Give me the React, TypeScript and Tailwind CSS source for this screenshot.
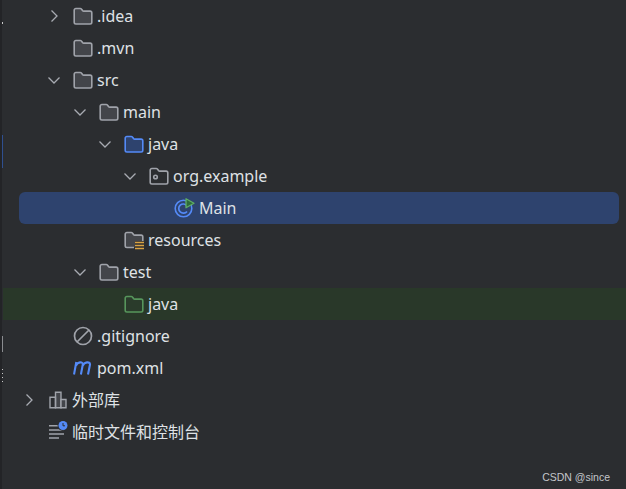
import type { ReactNode } from "react";

const gray = "#a0a3aa";
const folderPath =
  "M1.2 3.2A1.7 1.7 0 0 1 2.9 1.5h4.3c.5 0 .9.2 1.2.6l1.2 1.5c.3.3.6.5 1 .5h6.5a1.7 1.7 0 0 1 1.7 1.7v9.5a1.7 1.7 0 0 1-1.7 1.7H2.9a1.7 1.7 0 0 1-1.7-1.7z";

function Chevron({ open }: { open?: boolean }) {
  return (
    <svg width="16" height="16" viewBox="0 0 16 16" fill="none" stroke="#a8abb2" strokeWidth="1.3">
      {open ? <path d="M2.5 5.5 8 11l5.5-5.5" /> : <path d="M5.5 2.5 11 8l-5.5 5.5" />}
    </svg>
  );
}

function Folder({ stroke = gray, fill = "#43454a" }: { stroke?: string; fill?: string }) {
  return (
    <svg width="20" height="18" viewBox="0 0 20 18" fill={fill} stroke={stroke} strokeWidth="1.6">
      <path d={folderPath} />
    </svg>
  );
}

function PackageIcon() {
  return (
    <svg width="20" height="18" viewBox="0 0 20 18" fill="none" stroke={gray} strokeWidth="1.6">
      <path d={folderPath} />
      <circle cx="6.5" cy="10" r="1.8" />
    </svg>
  );
}

function ResourcesIcon() {
  return (
    <svg width="20" height="18" viewBox="0 0 20 18" fill="none" className="overflow-visible">
      <path
        d="M10 16.5H2.9a1.7 1.7 0 0 1-1.7-1.7V3.2A1.7 1.7 0 0 1 2.9 1.5h4.3c.5 0 .9.2 1.2.6l1.2 1.5c.3.3.6.5 1 .5h6.5a1.7 1.7 0 0 1 1.7 1.7V10"
        fill="#43454a"
        stroke={gray}
        strokeWidth="1.6"
      />
      <path d="M11 10h9v8.5h-9z" fill="#2b2d30" />
      <path d="M11 11.5h9M11 14.5h9M11 17.5h9" stroke="#d9a343" strokeWidth="1.5" />
    </svg>
  );
}

function MainIcon() {
  return (
    <svg width="20" height="20" viewBox="0 0 20 20" fill="none" className="overflow-visible">
      <circle cx="8.5" cy="10.5" r="8.3" stroke="#548af7" strokeWidth="1.6" />
      <path d="M12 7.8A4.6 4.6 0 1 0 12 13.4" stroke="#548af7" strokeWidth="1.7" />
      <path d="M11 .8v9l8-4.5z" fill="#2f6b3c" stroke="#5fad65" strokeWidth="1.3" strokeLinejoin="round" />
    </svg>
  );
}

function IgnoreIcon() {
  return (
    <svg width="20" height="20" viewBox="0 0 20 20" fill="none" stroke={gray} strokeWidth="1.7">
      <circle cx="10" cy="10" r="8.5" />
      <path d="M4 16 16 4" />
    </svg>
  );
}

function MavenIcon() {
  return (
    <svg width="20" height="16" viewBox="0 0 20 16" fill="none" stroke="#548af7" strokeWidth="2.1">
      <path d="M1 14.5 3.3 2M3 5.5C4.5 1.8 10 1.2 9.8 4.5L7.9 14.5M9.8 5.5c1.5-3.7 7.4-4.3 7.2-1L15 14.5" />
    </svg>
  );
}

function LibraryIcon() {
  return (
    <svg width="18" height="18" viewBox="0 0 18 18" fill="none" stroke={gray} strokeWidth="1.4">
      <path d="M6.5 1.2h5.5v15.6H6.5z" fill="#43454a" />
      <path d="M12 8.5h5v8.3h-5z" fill="#43454a" />
      <path d="M1 6.2h5.5v10.6H1z" />
    </svg>
  );
}

function ScratchIcon() {
  return (
    <svg width="20" height="20" viewBox="0 0 20 20" fill="none" className="overflow-visible">
      <path d="M1 3.7h9M1 8h15M1 12h15M1 16h10" stroke={gray} strokeWidth="1.5" />
      <circle cx="15" cy="3.5" r="5.4" fill="#2b2d30" />
      <circle cx="15" cy="3.5" r="4.5" fill="#548af7" />
      <path d="M15 1v2.8h2" stroke="#2b2d30" strokeWidth="1" />
    </svg>
  );
}

function Row({
  pad,
  chevron,
  icon,
  label,
  className = "",
}: {
  pad: string;
  chevron?: "open" | "closed";
  icon: ReactNode;
  label: string;
  className?: string;
}) {
  return (
    <div className={`flex h-8 shrink-0 items-center ${pad} ${className}`}>
      <span className="flex w-[16px] shrink-0 justify-center">
        {chevron && <Chevron open={chevron === "open"} />}
      </span>
      <span className="ml-[11px] flex w-[20px] shrink-0 justify-center">{icon}</span>
      <span className="ml-[4px] whitespace-nowrap">{label}</span>
    </div>
  );
}

function Gutter() {
  return (
    <div className="flex w-[3px] shrink-0 flex-col border-l-2 border-[#232427]">
      <div className="mt-[22px] h-[2px] bg-[#c8c8c8]" />
      <div className="mt-[111px] h-[33px] bg-[#2f4f8f]" />
      <div className="mt-[168px] h-[16px] bg-[#8a8c90]" />
      <div className="mt-[17px] h-px bg-[#c8c8c8]" />
      <div className="mt-[3px] h-px bg-[#c8c8c8]" />
      <div className="mt-[3px] h-px bg-[#c8c8c8]" />
      <div className="mt-[3px] h-px bg-[#c8c8c8]" />
    </div>
  );
}

export default function App() {
  return (
    <div className="flex h-[489px] w-[626px] overflow-hidden bg-[#2b2d30] font-['Noto_Sans','Noto_Sans_CJK_SC',sans-serif] text-[16px] text-[#dfe1e5]">
      <Gutter />
      <div className="flex min-w-0 flex-1 flex-col">
        <Row pad="pl-[43px]" chevron="closed" icon={<Folder />} label=".idea" />
        <Row pad="pl-[43px]" icon={<Folder />} label=".mvn" />
        <Row pad="pl-[43px]" chevron="open" icon={<Folder />} label="src" />
        <Row pad="pl-[69px]" chevron="open" icon={<Folder />} label="main" />
        <Row pad="pl-[94px]" chevron="open" icon={<Folder stroke="#548af7" fill="#2e436e" />} label="java" />
        <Row pad="pl-[119px]" chevron="open" icon={<PackageIcon />} label="org.example" />
        <Row
          pad="pl-[129px]"
          icon={<MainIcon />}
          label="Main"
          className="ml-[16px] w-[600px] rounded-md bg-[#2e436e]"
        />
        <Row pad="pl-[94px]" icon={<ResourcesIcon />} label="resources" />
        <Row pad="pl-[69px]" chevron="open" icon={<Folder />} label="test" />
        <Row pad="pl-[94px]" icon={<Folder stroke="#57965c" fill="#2a3b2b" />} label="java" className="bg-[#293829]" />
        <Row pad="pl-[43px]" icon={<IgnoreIcon />} label=".gitignore" />
        <Row pad="pl-[43px]" icon={<MavenIcon />} label="pom.xml" />
        <Row pad="pl-[18px]" chevron="closed" icon={<LibraryIcon />} label="外部库" />
        <Row pad="pl-[18px]" icon={<ScratchIcon />} label="临时文件和控制台" />
        <div className="mt-auto flex justify-end pb-[5px] pr-[16px] font-['Liberation_Sans',sans-serif] text-[10.5px] leading-[14px] text-[#c4c6ca]">
          CSDN @since
        </div>
      </div>
    </div>
  );
}
